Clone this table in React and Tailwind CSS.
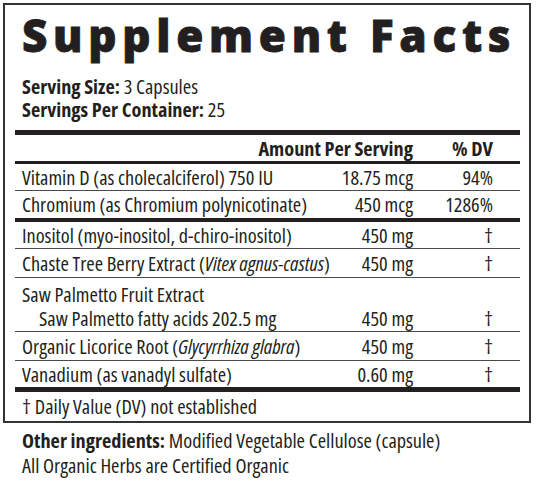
function Row({ name, amount, dv, className = "" }) {
  return (
    <div className={"flex items-start pl-[7px] pr-[27px] " + className}>
      <div className="flex-1 whitespace-nowrap">{name}</div>
      <div className="text-right whitespace-nowrap">{amount}</div>
      <div className="w-[80px] text-right whitespace-nowrap">{dv}</div>
    </div>
  );
}

function Thin() {
  return <div className="h-px bg-[#4a4a4a]" />;
}

export default function App() {
  return (
    <div className="w-[540px] h-[486px] bg-white pt-[3px] pl-[3px] font-['Open_Sans',sans-serif] [font-stretch:75%] text-[20.3px] text-[#231f20]">
      <div className="w-[528px] border-2 border-[#333333] pl-[10px] pr-[9px]">
        <h1 className="pt-[8px] pl-[7px] text-[44px] leading-[44px] font-extrabold tracking-[5.7px] [font-stretch:100%] [-webkit-text-stroke:0.8px_#231f20] whitespace-nowrap">
          Supplement Facts
        </h1>
        <div className="mt-[18px] pl-[7px] leading-[23px]">
          <div>
            <span className="font-bold">Serving Size:</span> 3 Capsules
          </div>
          <div>
            <span className="font-bold">Servings Per Container:</span> 25
          </div>
        </div>
        <div className="mt-[9px] h-[5px] bg-[#231f20]" />
        <Row
          className="h-[26px] leading-[26px] font-bold"
          name=""
          amount="Amount Per Serving"
          dv="% DV"
        />
        <div className="h-[3px] bg-[#231f20]" />
        <Row
          className="h-[26px] leading-[26px]"
          name="Vitamin D (as cholecalciferol) 750 IU"
          amount="18.75 mcg"
          dv="94%"
        />
        <Thin />
        <Row
          className="h-[27px] leading-[27px]"
          name="Chromium (as Chromium polynicotinate)"
          amount="450 mcg"
          dv="1286%"
        />
        <div className="h-[4px] bg-[#231f20]" />
        <Row
          className="h-[26px] leading-[26px]"
          name="Inositol (myo-inositol, d-chiro-inositol)"
          amount="450 mg"
          dv="†"
        />
        <Thin />
        <Row
          className="h-[28px] leading-[28px]"
          name={
            <>
              Chaste Tree Berry Extract (<i>Vitex agnus-castus</i>)
            </>
          }
          amount="450 mg"
          dv="†"
        />
        <Thin />
        <div className="flex h-[53px] pt-[4px] leading-[24px] pl-[7px] pr-[27px]">
          <div className="flex-1 whitespace-nowrap">
            <div>Saw Palmetto Fruit Extract</div>
            <div className="pl-[17px]">Saw Palmetto fatty acids 202.5 mg</div>
          </div>
          <div className="pt-[24px] text-right whitespace-nowrap">450 mg</div>
          <div className="pt-[24px] w-[80px] text-right">†</div>
        </div>
        <Thin />
        <Row
          className="h-[28px] leading-[28px]"
          name={
            <>
              Organic Licorice Root (<i>Glycyrrhiza glabra</i>)
            </>
          }
          amount="450 mg"
          dv="†"
        />
        <Thin />
        <Row
          className="h-[26px] leading-[26px]"
          name="Vanadium (as vanadyl sulfate)"
          amount="0.60 mg"
          dv="†"
        />
        <div className="h-[5px] bg-[#231f20]" />
        <div className="h-[29px] leading-[29px] pl-[7px]">† Daily Value (DV) not established</div>
      </div>
      <div className="mt-[5px] pl-[19px] leading-[25px]">
        <div>
          <span className="font-bold">Other ingredients:</span> Modified Vegetable Cellulose (capsule)
        </div>
        <div>All Organic Herbs are Certified Organic</div>
      </div>
    </div>
  );
}
